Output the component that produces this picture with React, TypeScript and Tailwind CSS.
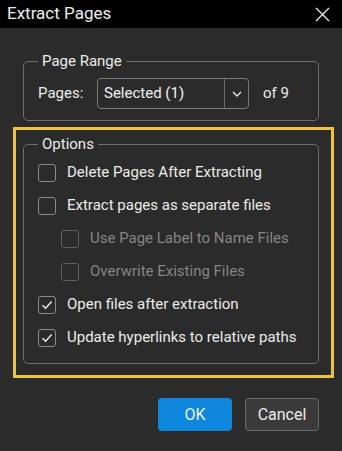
import React from 'react';

const font = { fontFamily: 'Roboto, "Liberation Sans", sans-serif' };

function Box({ checked, disabled }: { checked?: boolean; disabled?: boolean }) {
  return (
    <div
      className={`flex h-[18px] w-[18px] shrink-0 items-center justify-center rounded-[3px] border ${
        disabled ? 'border-[#5f5f5f]' : 'border-[#8a8a8a]'
      }`}
    >
      {checked ? (
        <svg width="12" height="10" viewBox="0 0 12 10" fill="none">
          <path d="M1.5 5.2 L4.6 8.3 L10.6 1.5" stroke="#f2f2f2" strokeWidth="1.3" />
        </svg>
      ) : null}
    </div>
  );
}

function Option({ label, checked, disabled, indent }: { label: string; checked?: boolean; disabled?: boolean; indent?: boolean }) {
  return (
    <div className={`flex h-[33px] items-center gap-[11px] ${indent ? 'pl-[23px]' : ''}`}>
      <Box checked={checked} disabled={disabled} />
      <span className={`text-[15px] ${disabled ? 'text-[#858585]' : 'text-[#ececec]'}`}>{label}</span>
    </div>
  );
}

export default function App() {
  return (
    <div className="flex h-[451px] w-[342px] flex-col bg-[#2b2b2b]" style={font}>
      <div className="flex h-[28px] items-center justify-between bg-black pl-[7px] pr-[12px]">
        <span className="text-[17px] text-[#ececec]">Extract Pages</span>
        <svg width="15" height="15" viewBox="0 0 15 15" fill="none">
          <path d="M1 1 L14 14 M14 1 L1 14" stroke="#e6e6e6" strokeWidth="1.4" />
        </svg>
      </div>

      <div className="flex flex-col px-[13px] pt-[23px]">
        <fieldset className="mx-[10px] rounded-[5px] border border-[#6e6e6e] pb-[11px] pl-[14px] pr-[14px]">
          <legend className="px-[4px] text-[15px] leading-[20px] text-[#ececec]">Page Range</legend>
          <div className="mt-[7px] flex items-center">
            <span className="w-[59px] text-[15px] text-[#ececec]">Pages:</span>
            <div className="flex h-[31px] w-[152px] items-center rounded-[4px] border border-[#7a7a7a]">
              <span className="flex-1 pl-[6px] text-[15px] text-[#f2f2f2]">Selected (1)</span>
              <div className="flex h-full w-[24px] items-center justify-center border-l border-[#6a6a6a]">
                <svg width="10" height="6" viewBox="0 0 10 6" fill="none">
                  <path d="M1 1 L5 5 L9 1" stroke="#e6e6e6" strokeWidth="1.4" />
                </svg>
              </div>
            </div>
            <span className="ml-[14px] text-[15px] text-[#ececec]">of 9</span>
          </div>
        </fieldset>

        <div className="mt-[6px] mr-[-5px] border-[3px] border-[#edc04a] pb-[11px] pl-[7px] pr-[12px] pt-[4px]">
          <fieldset className="rounded-[5px] border border-[#6e6e6e] pb-[9px] pl-[14px] pr-[14px]">
            <legend className="px-[4px] text-[15px] leading-[20px] text-[#ececec]">Options</legend>
            <div className="mt-[2px] flex flex-col">
              <Option label="Delete Pages After Extracting" />
              <Option label="Extract pages as separate files" />
              <Option label="Use Page Label to Name Files" disabled indent />
              <Option label="Overwrite Existing Files" disabled indent />
              <Option label="Open files after extraction" checked />
              <Option label="Update hyperlinks to relative paths" checked />
            </div>
          </fieldset>
        </div>

        <div className="mt-[20px] flex justify-end gap-[13px] pr-[10px]">
          <button className="h-[33px] w-[74px] rounded-[4px] bg-[#0d86dc] text-[16px] text-[#eef6ff]">OK</button>
          <button className="h-[33px] w-[74px] rounded-[4px] border border-[#6a6a6a] bg-[#3a3a3a] text-[16px] text-[#ececec]">
            Cancel
          </button>
        </div>
      </div>
    </div>
  );
}
